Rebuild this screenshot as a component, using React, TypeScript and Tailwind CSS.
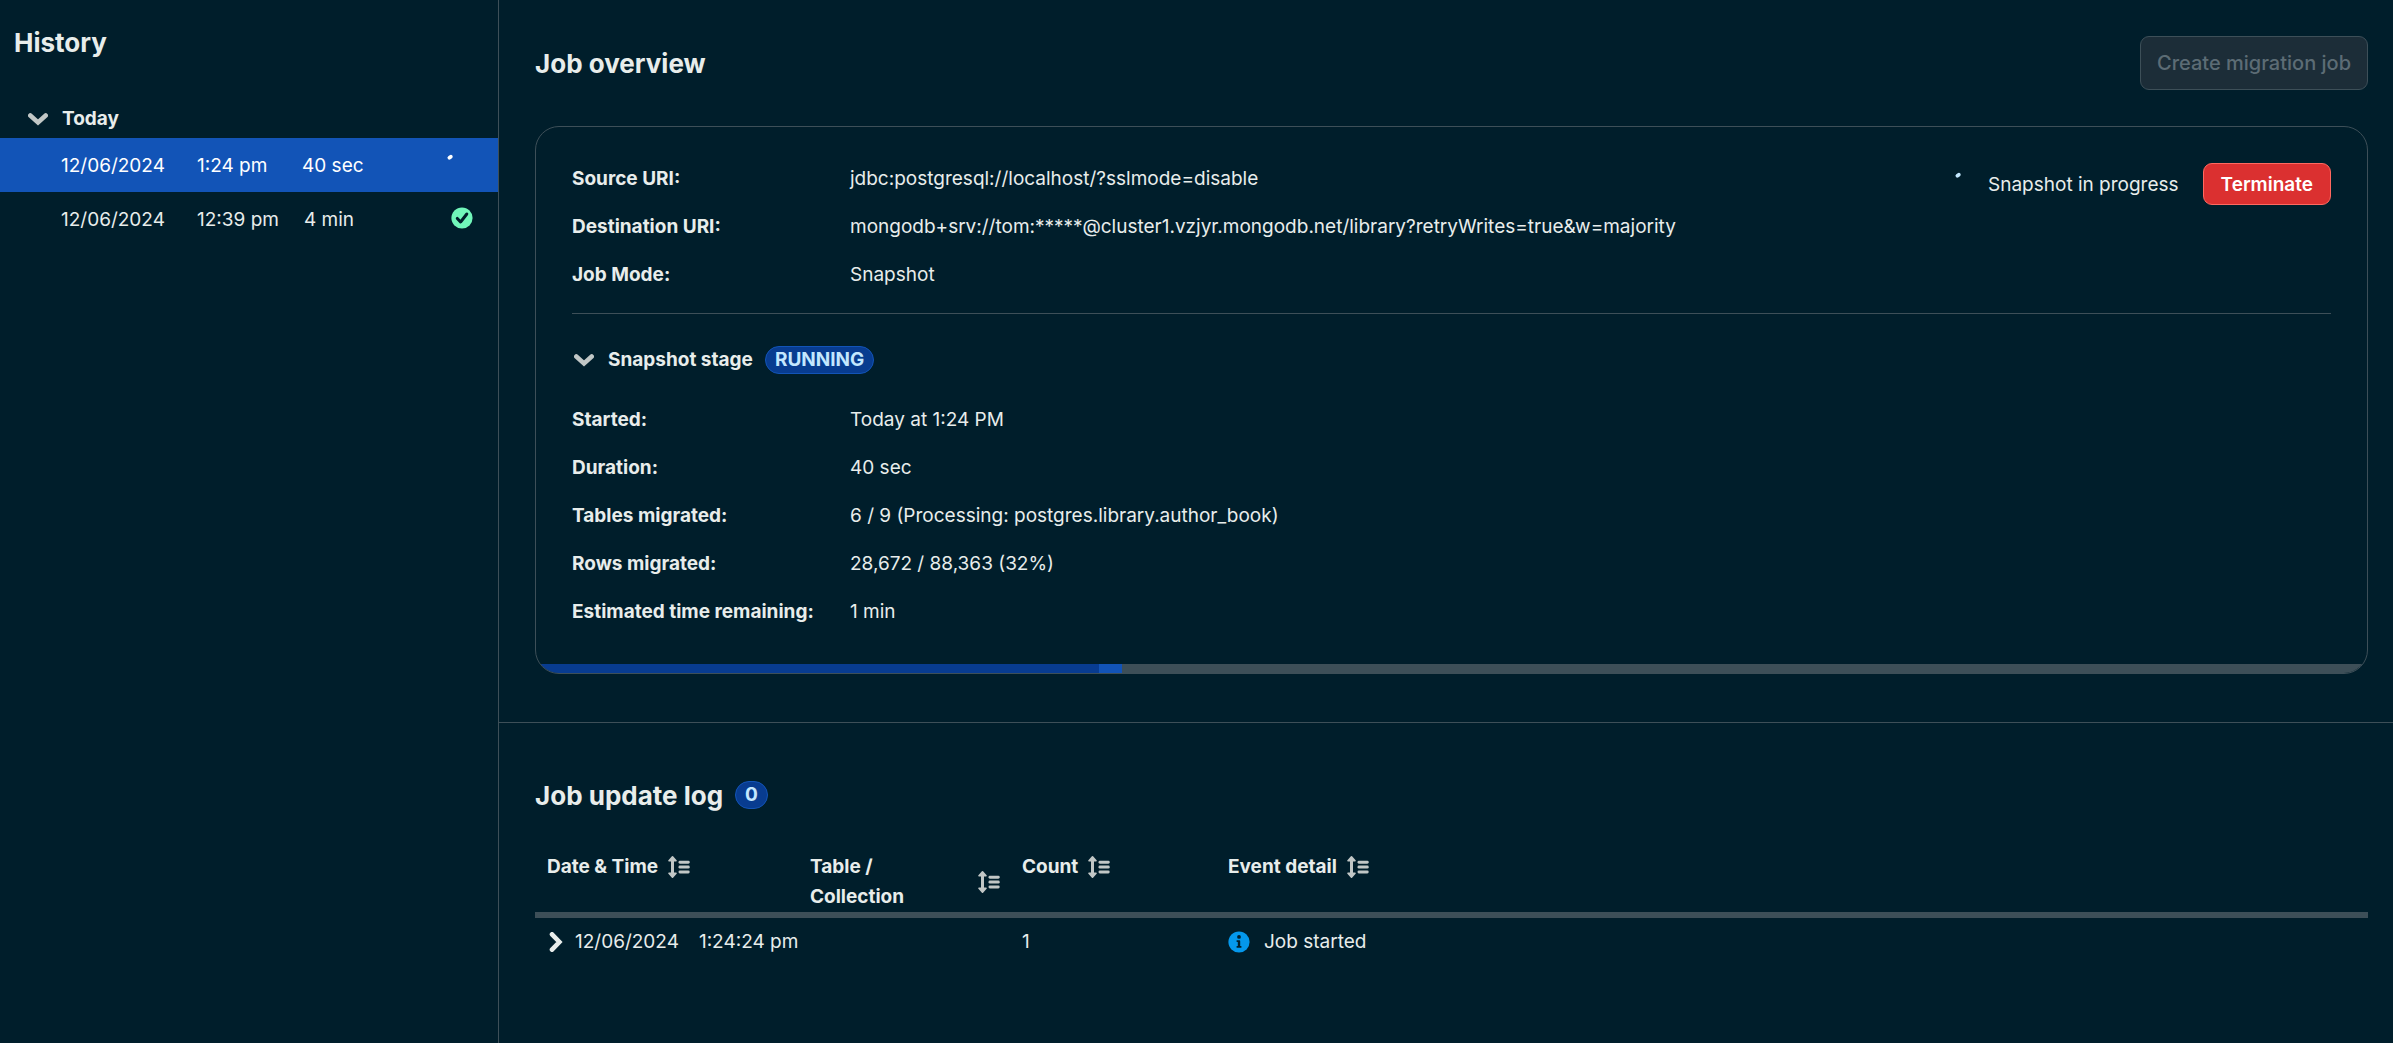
import type { ReactNode } from "react";

function ChevronDown() {
  return (
    <svg width="20" height="13" viewBox="0 0 20 13" fill="none" aria-hidden="true" className="shrink-0">
      <path d="M2.3 2.5 10 9.4l7.7-6.9" stroke="#C1C7C6" strokeWidth="4.6" strokeLinecap="round" strokeMiterlimit="8" />
    </svg>
  );
}

function ChevronRight() {
  return (
    <svg width="14" height="20" viewBox="0 0 14 20" fill="none" aria-hidden="true" className="shrink-0">
      <path d="M3 2.3 10.4 10 3 17.7" stroke="#E8EDEB" strokeWidth="4.6" strokeLinecap="round" strokeMiterlimit="8" />
    </svg>
  );
}

function SortIcon() {
  return (
    <svg width="22" height="22" viewBox="0 0 22 22" fill="#C1C7C6" aria-hidden="true" className="shrink-0">
      <path d="M5.1.3a.9.9 0 0 0-1.2 0L.4 4.2c-.5.6-.1 1.3.6 1.3h2v11H1c-.7 0-1.1.7-.6 1.3l3.5 3.9c.3.4.9.4 1.2 0l3.5-3.9c.5-.6.1-1.3-.6-1.3H6v-11h2c.7 0 1.1-.7.6-1.3L5.1.3Z" />
      <rect x="10.5" y="4.7" width="11.2" height="3" rx="1.4" />
      <rect x="10.5" y="9.6" width="11.2" height="3" rx="1.4" />
      <rect x="10.5" y="14.5" width="11.2" height="3" rx="1.4" />
    </svg>
  );
}

function CheckIcon() {
  return (
    <svg width="22" height="22" viewBox="0 0 22 22" fill="none" role="img" aria-label="Completed" className="shrink-0">
      <circle cx="11" cy="11" r="10.6" fill="#71F6BA" />
      <path d="M6.3 11.4 9.6 15l6.2-8" stroke="#001E2B" strokeWidth="3" strokeLinecap="round" strokeLinejoin="round" />
    </svg>
  );
}

function InfoIcon() {
  return (
    <svg width="22" height="22" viewBox="0 0 22 22" aria-hidden="true" className="shrink-0">
      <circle cx="11" cy="11" r="10.6" fill="#0498EC" />
      <circle cx="11" cy="5.9" r="1.9" fill="#001E2B" />
      <path d="M8.6 9.2h2.6c.6 0 1 .4 1 1v4.7h1.2v1.9H8.6v-1.9h1.2v-3.8H8.6V9.2Z" fill="#001E2B" />
    </svg>
  );
}

function Spinner({ color }: { color: string }) {
  return (
    <svg width="24" height="24" viewBox="0 0 24 24" fill="none" role="img" aria-label="Running" className="shrink-0">
      <path d="M5.4 3.7 6.8 2.7" stroke={color} strokeWidth="3.8" strokeLinecap="round" />
    </svg>
  );
}

function Badge({ children }: { children: ReactNode }) {
  return (
    <span className="flex h-7 min-w-8 items-center justify-center rounded-full border border-[#1254B7] bg-[#083C90] px-[9px] text-[19px] leading-6 font-bold text-[#C3E7FE]">
      {children}
    </span>
  );
}

function Details({ rows }: { rows: [string, string][] }) {
  return (
    <dl>
      {rows.map(([label, value]) => (
        <div key={label} className="flex min-h-12 items-center">
          <dt className="w-[278px] shrink-0 font-bold">{label}</dt>
          <dd>{value}</dd>
        </div>
      ))}
    </dl>
  );
}

const headings = ["Date & Time", "Table / Collection", "Count", "Event detail"];

export default function App() {
  return (
    <div className="flex min-h-screen bg-[#001E2B] font-['Inter',sans-serif] text-[19px] leading-[30px] text-[#E8EDEB]">
      <aside className="w-[499px] shrink-0 border-r border-[#3D4F58]">
        <h2 className="px-[14px] pt-[25px] text-[26px] leading-9 font-bold">History</h2>
        <button type="button" aria-expanded="true" className="mt-10 mb-px flex h-9 w-full items-center gap-[14px] pl-7 font-bold">
          <ChevronDown />
          Today
        </button>
        <ul>
          <li>
            <button type="button" aria-current="true" className="flex h-[54px] w-full items-center bg-[#1254B7] pt-0.5 pr-[30px] pl-[61px] text-left text-white">
              <span className="w-[136px]">12/06/2024</span>
              <span className="w-[105px]">1:24 pm</span>
              <span className="flex-1">40 sec</span>
              <Spinner color="#FFFFFF" />
            </button>
          </li>
          <li>
            <button type="button" className="flex h-[54px] w-full items-center pt-0.5 pr-[25px] pl-[61px] text-left">
              <span className="w-[136px]">12/06/2024</span>
              <span className="w-[107px]">12:39 pm</span>
              <span className="flex-1">4 min</span>
              <span className="pb-1">
                <CheckIcon />
              </span>
            </button>
          </li>
        </ul>
      </aside>

      <main className="min-w-0 flex-1">
        <section className="border-b border-[#3D4F58] pt-9 pr-[25px] pb-12 pl-9">
          <header className="flex items-center justify-between">
            <h1 className="pt-0.5 text-[26px] leading-9 font-bold">Job overview</h1>
            <button type="button" disabled className="h-[54px] rounded-[9px] border border-[#3D4F58] bg-[#1C2D38] px-4 text-[20px] font-medium text-[#5C6C75]">
              Create migration job
            </button>
          </header>

          <div className="mt-9 overflow-hidden rounded-[24px] border border-[#3D4F58]">
            <div className="px-9 pt-7 pb-7">
              <div className="flex items-start justify-between">
                <Details
                  rows={[
                    ["Source URI:", "jdbc:postgresql://localhost/?sslmode=disable"],
                    ["Destination URI:", "mongodb+srv://tom:*****@cluster1.vzjyr.mongodb.net/library?retryWrites=true&w=majority"],
                    ["Job Mode:", "Snapshot"],
                  ]}
                />
                <div className="mt-2 flex items-center">
                  <Spinner color="#C3E7FE" />
                  <span className="mr-6 ml-3 pt-0.5">Snapshot in progress</span>
                  <button type="button" className="h-[42px] rounded-[9px] border border-[#FF6960] bg-[#DB3030] px-[17px] pt-0.5 font-semibold text-white">
                    Terminate
                  </button>
                </div>
              </div>
              <hr className="mt-[14px] border-[#3D4F58]" />
              <div className="mt-[22px] flex h-12 items-center">
                <button type="button" aria-expanded="true" className="mr-3 flex items-center gap-[14px] pl-0.5 font-bold">
                  <ChevronDown />
                  Snapshot stage
                </button>
                <Badge>RUNNING</Badge>
              </div>
              <div className="mt-3">
                <Details
                  rows={[
                    ["Started:", "Today at 1:24 PM"],
                    ["Duration:", "40 sec"],
                    ["Tables migrated:", "6 / 9 (Processing: postgres.library.author_book)"],
                    ["Rows migrated:", "28,672 / 88,363 (32%)"],
                    ["Estimated time remaining:", "1 min"],
                  ]}
                />
              </div>
            </div>
            <div role="progressbar" aria-label="Migration progress" aria-valuenow={32} aria-valuemin={0} aria-valuemax={100} className="flex h-[9px] bg-[#3D4F58]">
              <div className="w-[32%] bg-[linear-gradient(90deg,#083C90_96%,#1254B7_96%)]" />
            </div>
          </div>
        </section>

        <section className="pt-12 pr-[25px] pl-9">
          <div className="flex h-12 items-center gap-3">
            <h2 className="pt-0.5 text-[26px] leading-9 font-bold">Job update log</h2>
            <Badge>0</Badge>
          </div>
          <table className="mt-[33px] w-full table-fixed border-collapse text-left">
            <colgroup>
              <col className="w-[263px]" />
              <col className="w-[212px]" />
              <col className="w-[206px]" />
              <col />
            </colgroup>
            <thead>
              <tr className="border-b-[6px] border-[#3D4F58]">
                {headings.map((h) => (
                  <th key={h} scope="col" className="pr-[10px] pl-3 align-top font-bold">
                    <button type="button" className="flex items-center gap-[10px] text-left">
                      <span>{h}</span>
                      <SortIcon />
                    </button>
                  </th>
                ))}
              </tr>
            </thead>
            <tbody>
              <tr>
                <td className="h-12 pt-0.5 pl-[14px] whitespace-nowrap">
                  <button type="button" aria-label="Expand row" className="mr-3 align-middle">
                    <ChevronRight />
                  </button>
                  <span className="mr-5">12/06/2024</span>
                  <span>1:24:24 pm</span>
                </td>
                <td />
                <td className="px-3 pt-0.5">1</td>
                <td className="px-3 pt-0.5">
                  <span className="flex items-center gap-[14px]">
                    <InfoIcon />
                    Job started
                  </span>
                </td>
              </tr>
            </tbody>
          </table>
        </section>
      </main>
    </div>
  );
}
